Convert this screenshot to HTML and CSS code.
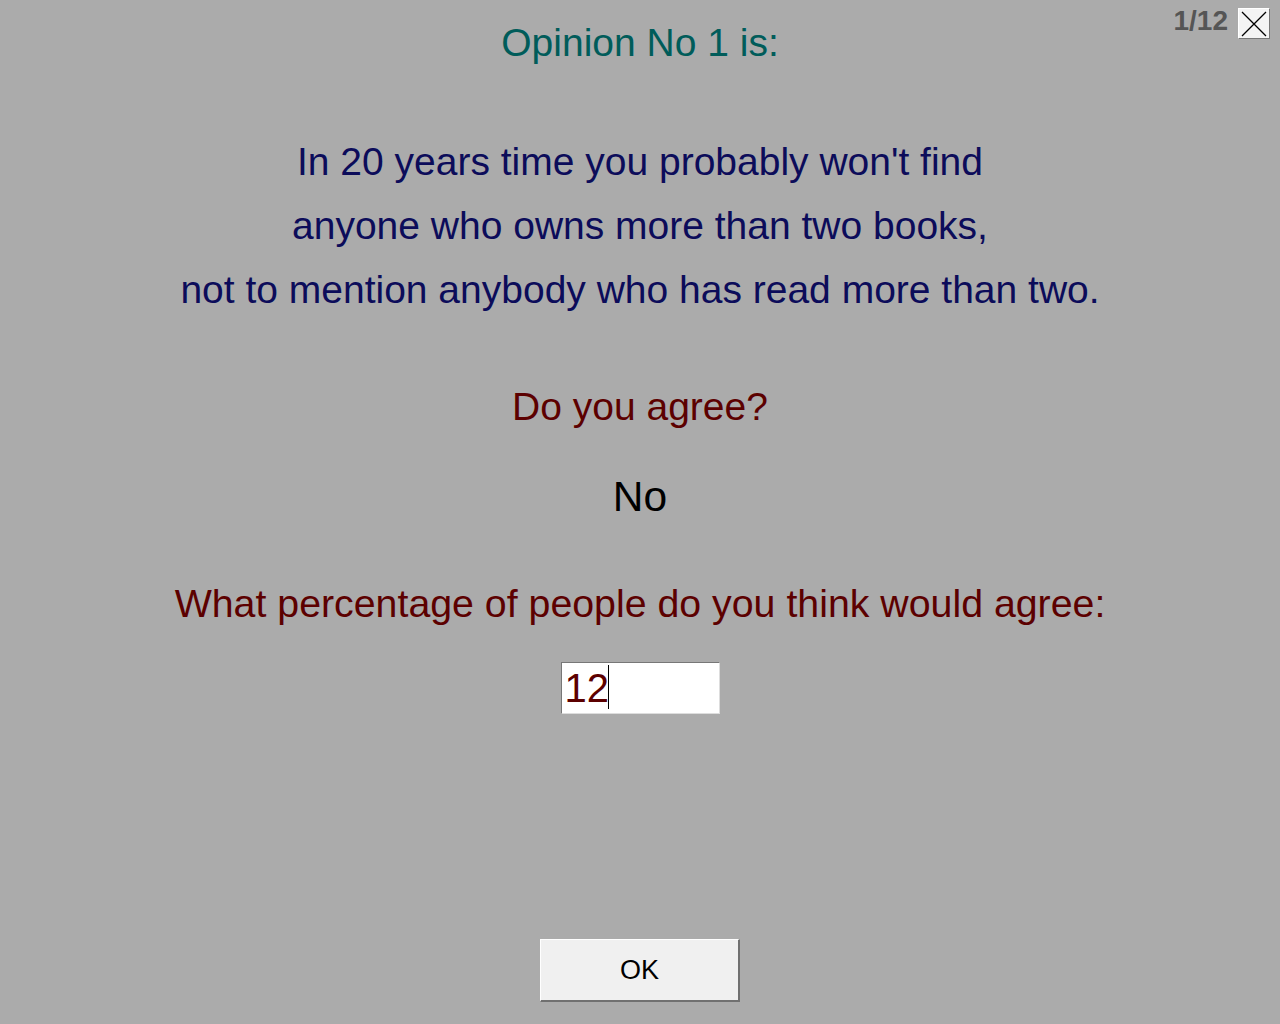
FILE: index.html
```html
<!DOCTYPE html>
<html>
<head>
<meta charset="utf-8">
<link rel="stylesheet" href="styles.css">
</head>
<body>
<div class="page">
  <div class="topbar">
    <span class="counter">1/12</span>
    <button class="close" aria-label="Close">
      <svg width="28" height="26" viewBox="0 0 28 26"><path d="M2 1 L26 25 M26 1 L2 25" stroke="#000" stroke-width="1.3" fill="none"/></svg>
    </button>
  </div>
  <h1 class="title">Opinion No 1 is:</h1>
  <div class="opinion">
    <p>In 20 years time you probably won't find</p>
    <p>anyone who owns more than two books,</p>
    <p>not to mention anybody who has read more than two.</p>
  </div>
  <div class="question">Do you agree?</div>
  <div class="answer">No</div>
  <div class="question pct">What percentage of people do you think would agree:</div>
  <div class="inputrow">
    <input class="pctinput" type="text" value="12">
    <span class="caret"></span>
  </div>
  <div class="spacer"></div>
  <div class="btnrow"><button class="ok">OK</button></div>
</div>
</body>
</html>
```
FILE: styles.css
```css
html, body {
  margin: 0;
  padding: 0;
  height: 100%;
  background: #ababab;
}
body {
  font-family: "Liberation Sans", Arial, sans-serif;
}
.page {
  position: relative;
  height: 1024px;
  display: flex;
  flex-direction: column;
  align-items: center;
}
.topbar {
  position: absolute;
  top: 8px;
  right: 10px;
  display: flex;
  align-items: flex-start;
  gap: 10px;
}
.counter {
  font-size: 28px;
  font-weight: bold;
  color: #555555;
  line-height: 26px;
}
.close {
  width: 32px;
  height: 31px;
  padding: 0;
  margin: 0;
  background: #f4f4f4;
  border: 1px solid #fff;
  border-right-color: #777;
  border-bottom-color: #777;
  display: flex;
  align-items: center;
  justify-content: center;
}
.title {
  margin: 22px 0 0 0;
  font-size: 39px;
  font-weight: normal;
  color: #005c5a;
  line-height: 42px;
}
.opinion {
  margin-top: 66px;
  text-align: center;
  color: #0c0c5a;
  font-size: 39px;
}
.opinion p {
  margin: 0;
  line-height: 64px;
}
.question {
  color: #5c0000;
  font-size: 39px;
  line-height: 42px;
  margin-top: 64px;
}
.answer {
  color: #000;
  font-size: 42.5px;
  line-height: 46px;
  margin-top: 46px;
}
.pct {
  margin-top: 62px;
  font-size: 39.3px;
}
.inputrow {
  margin-top: 38px;
  position: relative;
  display: flex;
}
.pctinput {
  box-sizing: border-box;
  width: 159px;
  height: 52px;
  font-family: "Liberation Sans", Arial, sans-serif;
  font-size: 40px;
  color: #5c0000;
  padding: 0 3px;
  border: 1px solid #777;
  border-right-color: #ddd;
  border-bottom-color: #ddd;
  background: #fff;
  outline: none;
}
.caret {
  position: absolute;
  left: 47px;
  top: 3px;
  width: 1px;
  height: 44px;
  background: #000;
}
.spacer {
  flex: 1;
}
.btnrow {
  margin-bottom: 22px;
}
.ok {
  box-sizing: border-box;
  width: 200px;
  height: 63px;
  background: #f0f0f0;
  border: 1px solid #fff;
  border-right: 2px solid #707070;
  border-bottom: 2px solid #707070;
  font-family: "Liberation Sans", Arial, sans-serif;
  font-size: 27px;
  color: #000;
  padding: 0;
}
```
